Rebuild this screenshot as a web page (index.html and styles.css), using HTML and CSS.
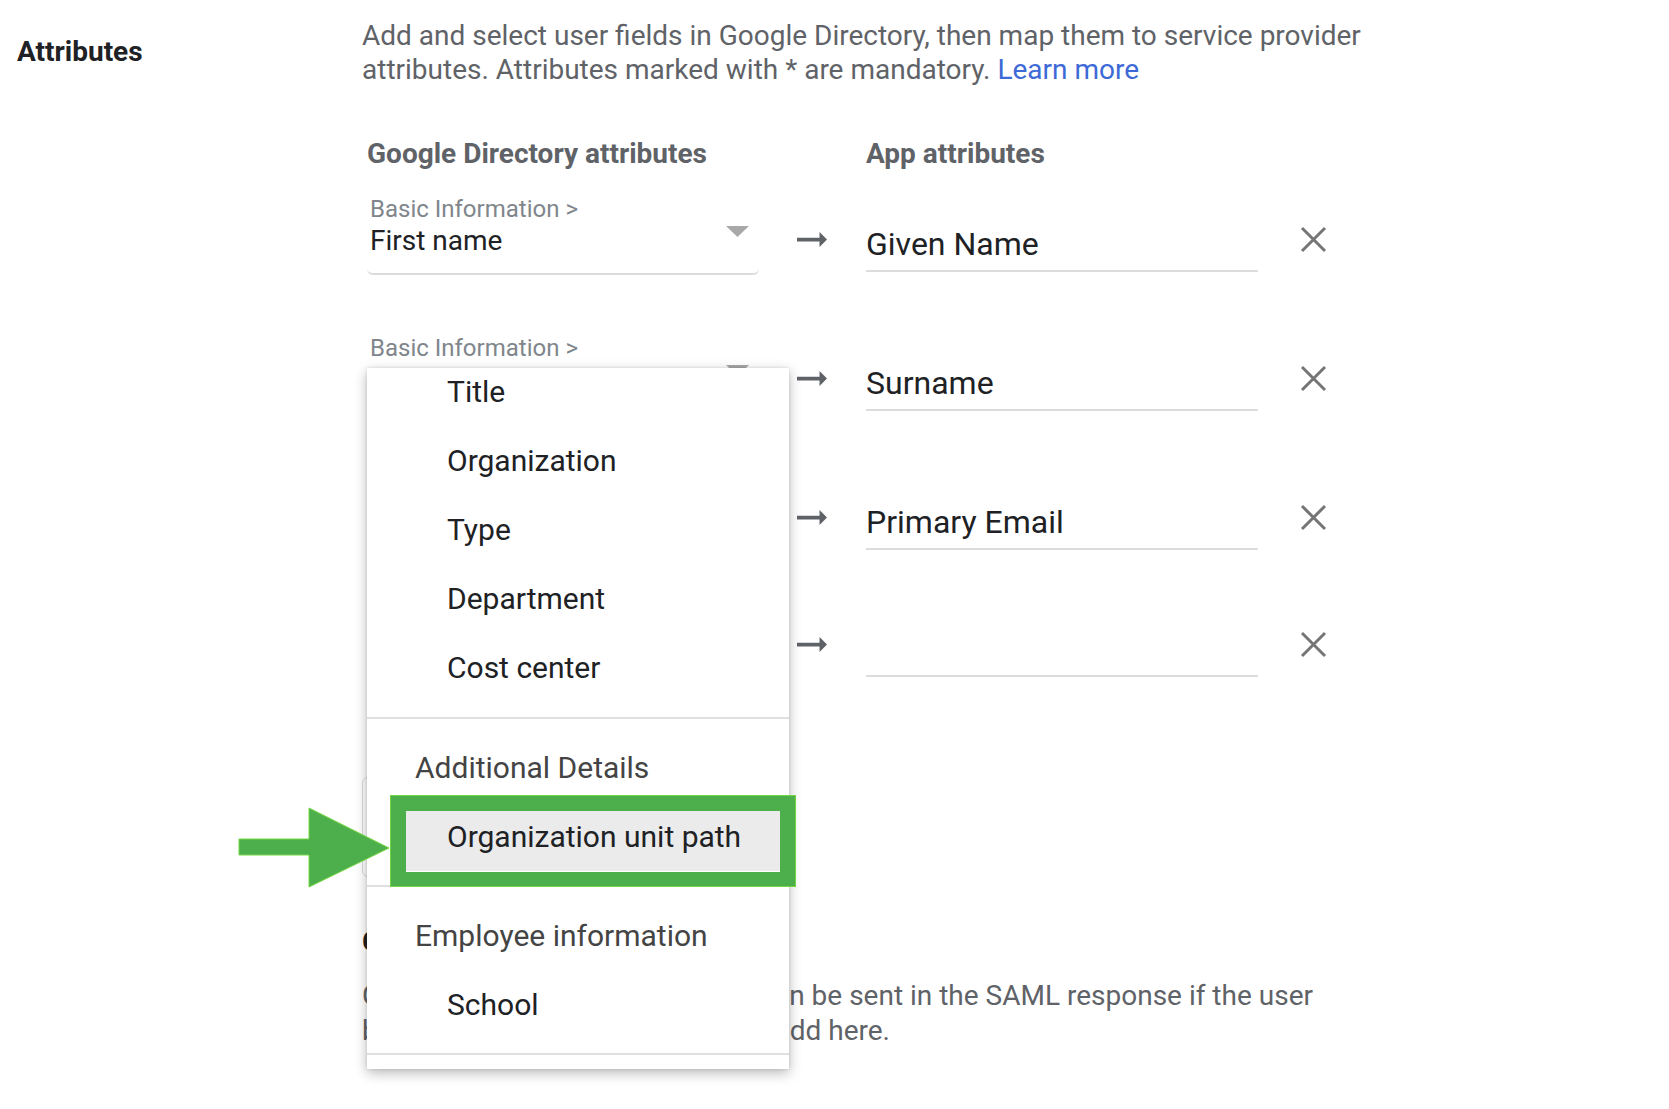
FILE: index.html
```html
<!DOCTYPE html>
<html lang="en">
<head>
<meta charset="utf-8">
<title>Attributes</title>
<link rel="stylesheet" href="styles.css">
</head>
<body>
<div class="page">
  <div class="side">
    <h2 class="side-title">Attributes</h2>
  </div>
  <div class="main">
    <p class="desc">Add and select user fields in Google Directory, then map them to service provider attributes. Attributes marked with * are mandatory. <a class="link" href="#">Learn more</a></p>

    <div class="mapping">
      <div class="col-heads">
        <div class="col-head col-head-dir">Google Directory attributes</div>
        <div class="col-head">App attributes</div>
      </div>

      <div class="rows">
        <div class="row">
          <div class="dd">
            <div class="dd-label">Basic Information &gt;</div>
            <div class="dd-value"><span>First name</span><svg class="dd-caret" viewBox="0 0 23 11"><path d="M0 0h23L11.5 11z"/></svg></div>
          </div>
          <svg class="map-arrow" viewBox="4 8 16 8"><path d="M16.01 11H4v2h12.01v3L20 12l-3.99-4z"/></svg>
          <div class="field">Given Name</div>
          <svg class="remove" viewBox="0 0 27 27"><path d="M2 2L25 25M25 2L2 25"/></svg>
        </div>

        <div class="row">
          <div class="dd">
            <div class="dd-label">Basic Information &gt;</div>
            <div class="dd-value"><span>Last name</span><svg class="dd-caret" viewBox="0 0 23 11"><path d="M0 0h23L11.5 11z"/></svg></div>
            <div class="menu">
              <ul class="menu-list">
                <li class="menu-group">
                  <div class="menu-head">Employee details</div>
                  <div class="menu-item">Title</div>
                  <div class="menu-item">Organization</div>
                  <div class="menu-item">Type</div>
                  <div class="menu-item">Department</div>
                  <div class="menu-item">Cost center</div>
                </li>
                <li class="menu-group">
                  <div class="menu-head">Additional Details</div>
                  <div class="menu-item is-active">Organization unit path</div>
                </li>
                <li class="menu-group">
                  <div class="menu-head">Employee information</div>
                  <div class="menu-item">School</div>
                </li>
                <li class="menu-group">
                  <div class="menu-head">Contact information</div>
                  <div class="menu-item">Phone</div>
                </li>
              </ul>
            </div>
          </div>
          <svg class="map-arrow" viewBox="4 8 16 8"><path d="M16.01 11H4v2h12.01v3L20 12l-3.99-4z"/></svg>
          <div class="field">Surname</div>
          <svg class="remove" viewBox="0 0 27 27"><path d="M2 2L25 25M25 2L2 25"/></svg>
        </div>

        <div class="row">
          <div class="dd">
            <div class="dd-label">Basic Information &gt;</div>
            <div class="dd-value"><span>Primary email</span><svg class="dd-caret" viewBox="0 0 23 11"><path d="M0 0h23L11.5 11z"/></svg></div>
          </div>
          <svg class="map-arrow" viewBox="4 8 16 8"><path d="M16.01 11H4v2h12.01v3L20 12l-3.99-4z"/></svg>
          <div class="field">Primary Email</div>
          <svg class="remove" viewBox="0 0 27 27"><path d="M2 2L25 25M25 2L2 25"/></svg>
        </div>

        <div class="row row-new">
          <div class="dd dd-empty">
            <div class="dd-value"><span></span><svg class="dd-caret" viewBox="0 0 23 11"><path d="M0 0h23L11.5 11z"/></svg></div>
          </div>
          <svg class="map-arrow" viewBox="4 8 16 8"><path d="M16.01 11H4v2h12.01v3L20 12l-3.99-4z"/></svg>
          <div class="field"></div>
          <svg class="remove" viewBox="0 0 27 27"><path d="M2 2L25 25M25 2L2 25"/></svg>
        </div>
      </div>
    </div>

    <button class="add-btn" type="button">ADD MAPPING</button>

    <h3 class="sub-title">Group membership (optional)</h3>
    <p class="note">Group membership information can be sent in the SAML response if the user belongs to any of the groups you add here.</p>
  </div>

  <svg class="callout-arrow" viewBox="0 0 153 82"><path d="M1 32H71V1L151 41L71 80V48H1Z"/></svg>
  <div class="callout-box"></div>
</div>
</body>
</html>
```

FILE: styles.css
```css
* {
  box-sizing: border-box;
}

html,
body {
  height: 100%;
}

body {
  margin: 0;
  background: #ffffff;
  font-family: Roboto, "Noto Sans", "Liberation Sans", Arial, sans-serif;
}

.page {
  position: relative;
  display: flex;
  align-items: flex-start;
  min-height: 100%;
}

/* left label column */
.side {
  flex: none;
  width: 362px;
  padding: 35px 0 0 17px;
}

.side-title {
  margin: 0;
  font-size: 28px;
  line-height: 34px;
  font-weight: 700;
  color: #202124;
}

/* main column */
.main {
  flex: none;
  width: 1025px;
  padding-top: 19px;
}

.desc {
  margin: 0;
  font-size: 28px;
  line-height: 34px;
  color: #5f6368;
}

.link {
  color: #3d6ad6;
  text-decoration: none;
}

.mapping {
  margin-top: 50px;
  padding-left: 5px;
}

.col-heads {
  display: flex;
  font-size: 28px;
  line-height: 34px;
  font-weight: 700;
  color: #5f6368;
}

.col-head-dir {
  width: 499px;
}

.rows {
  margin-top: 19px;
}

.row {
  display: flex;
  align-items: flex-start;
  height: 139px;
}

/* select-like dropdown */
.dd {
  position: relative;
  flex: none;
  width: 392px;
  padding: 5px 10px 15px 3px;
  border-bottom: 2px solid #dcdcdc;
  border-radius: 0 0 6px 6px;
}

.dd-label {
  font-size: 24px;
  line-height: 28px;
  color: #80868b;
}

.dd-value {
  display: flex;
  justify-content: space-between;
  align-items: flex-start;
  height: 34px;
  margin-top: 1px;
  font-size: 28px;
  line-height: 34px;
  color: #202124;
}

.dd-empty {
  padding-top: 33px;
}

.dd-caret {
  flex: none;
  width: 23px;
  height: 11px;
  margin-top: 2px;
  fill: #a8a8a8;
}

.map-arrow {
  flex: none;
  width: 30px;
  height: 15px;
  margin: 42px 0 0 38px;
  fill: #5f6368;
}

.field {
  flex: none;
  width: 392px;
  height: 47px;
  margin: 35px 0 0 39px;
  padding-bottom: 7px;
  border-bottom: 2px solid #dcdcdc;
  font-size: 32px;
  line-height: 38px;
  color: #202124;
}

.remove {
  flex: none;
  width: 27px;
  height: 27px;
  margin: 36px 0 0 42px;
  fill: none;
  stroke: #757575;
  stroke-width: 3;
}

.row-new .map-arrow {
  margin-top: 30px;
}

.row-new .field {
  margin-top: 23px;
}

.row-new .remove {
  margin-top: 24px;
}

/* open dropdown menu */
.menu {
  position: absolute;
  top: 39px;
  left: 0;
  z-index: 5;
  width: 422px;
  height: 701px;
  overflow: hidden;
  background: #ffffff;
  box-shadow: 0 4px 12px rgba(0, 0, 0, 0.28), 0 0 3px rgba(0, 0, 0, 0.12);
}

.menu-list {
  margin: -94px 0 0;
  padding: 0;
  list-style: none;
}

.menu-group {
  padding: 14px 0;
  border-bottom: 2px solid #e0e0e0;
}

.menu-group:first-child {
  padding-bottom: 15px;
}

.menu-head {
  height: 69px;
  padding-left: 48px;
  font-size: 30px;
  line-height: 69px;
  color: #444444;
  white-space: nowrap;
}

.menu-item {
  height: 69px;
  padding-left: 80px;
  font-size: 30px;
  line-height: 69px;
  color: #202124;
  white-space: nowrap;
}

.menu-item.is-active {
  margin: 0 9px 0 39px;
  padding-left: 41px;
  background: #ebebeb;
}

/* content under the menu */
.add-btn {
  display: block;
  width: 300px;
  height: 100px;
  margin-top: 31px;
  padding: 0 0 0 30px;
  border: 1px solid #dadce0;
  border-radius: 6px;
  background: #ffffff;
  font-family: Roboto, "Noto Sans", Arial, sans-serif;
  font-size: 24px;
  font-weight: 500;
  color: #1a73e8;
  text-align: left;
}

.sub-title {
  margin: 48px 0 0;
  font-size: 28px;
  line-height: 34px;
  font-weight: 700;
  color: #202124;
}

.note {
  margin: 19px 0 0;
  font-size: 28px;
  line-height: 35px;
  color: #5f6368;
}

/* green annotation */
.callout-arrow {
  position: absolute;
  left: 238px;
  top: 807px;
  z-index: 10;
  width: 153px;
  height: 82px;
  fill: #4caf4c;
  stroke: #74d842;
  stroke-width: 1;
}

.callout-box {
  position: absolute;
  left: 390px;
  top: 795px;
  z-index: 10;
  width: 406px;
  height: 92px;
  border-style: solid;
  border-color: #4caf4c;
  border-width: 16px 16px 15px 16px;
  outline: 1px solid #72d644;
  outline-offset: -1px;
}
```
